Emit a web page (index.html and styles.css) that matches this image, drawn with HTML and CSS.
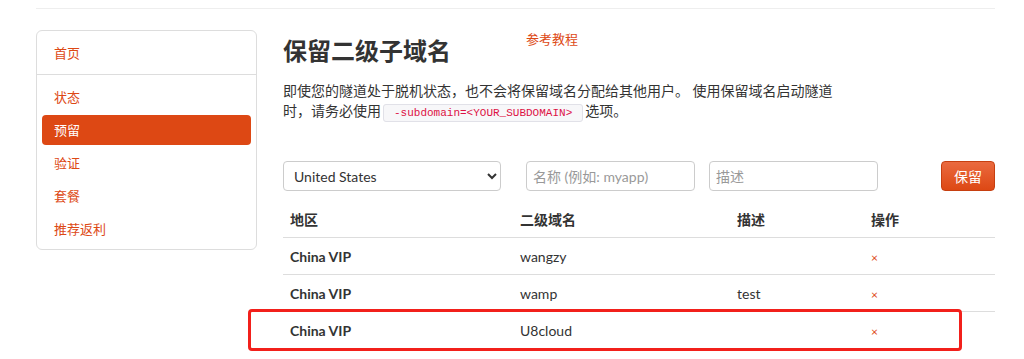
FILE: index.html
```html
<!DOCTYPE html>
<html lang="zh-CN">
<head>
    <meta charset="UTF-8">
    <title>保留二级子域名</title>
    <link rel="stylesheet" href="styles.css">
</head>
<body>

<div class="page">
    <div class="top-rule"></div>

    <div class="layout">
        <!-- 左侧菜单 -->
        <nav class="side-nav">
            <a class="nav-home" href="#">首页</a>
            <ul class="nav-list">
                <li><a href="#">状态</a></li>
                <li class="active"><a href="#">预留</a></li>
                <li><a href="#">验证</a></li>
                <li><a href="#">套餐</a></li>
                <li><a href="#">推荐返利</a></li>
            </ul>
        </nav>

        <!-- 右侧内容 -->
        <section class="content">
            <div class="title-row">
                <h1>保留二级子域名</h1>
                <a class="doc-link" href="#">参考教程</a>
            </div>
            <p class="intro">即使您的隧道处于脱机状态，也不会将保留域名分配给其他用户。 使用保留域名启动隧道时，请务必使用<code>-subdomain=&lt;YOUR_SUBDOMAIN&gt;</code>选项。</p>

            <form class="reserve-form">
                <select class="region-select">
                    <option>United States</option>
                    <option>China VIP</option>
                </select>
                <input class="name-input" type="text" placeholder="名称 (例如: myapp)">
                <input class="desc-input" type="text" placeholder="描述">
                <button class="reserve-btn" type="button">保留</button>
            </form>

            <div class="table-wrap">
                <table class="domain-table">
                    <thead>
                        <tr>
                            <th class="col-region">地区</th>
                            <th class="col-sub">二级域名</th>
                            <th class="col-desc">描述</th>
                            <th>操作</th>
                        </tr>
                    </thead>
                    <tbody>
                        <tr>
                            <td class="region">China VIP</td>
                            <td>wangzy</td>
                            <td></td>
                            <td><a class="del" href="#">×</a></td>
                        </tr>
                        <tr>
                            <td class="region">China VIP</td>
                            <td>wamp</td>
                            <td>test</td>
                            <td><a class="del" href="#">×</a></td>
                        </tr>
                        <tr>
                            <td class="region">China VIP</td>
                            <td>U8cloud</td>
                            <td></td>
                            <td><a class="del" href="#">×</a></td>
                        </tr>
                    </tbody>
                </table>
                <!-- 标注框 -->
                <div class="highlight-box"></div>
            </div>
        </section>
    </div>
</div>

</body>
</html>
```

FILE: styles.css
```css
/* --- 基本设置 --- */
:root {
    --orange: #dd4814;
    --text: #333;
    --muted: #999;
    --border: #ddd;
}

html,
body {
    min-height: 100%;
}

body {
    margin: 0;
    font-family: "Lato", "Noto Sans CJK SC", sans-serif;
    font-size: 14px;
    color: var(--text);
    background: #fff;
}

.page {
    width: 959px;
    margin-left: 36px;
    padding-top: 8px;
    padding-bottom: 12px;
}

.top-rule {
    border-top: 1px solid #eee;
}

.layout {
    display: flex;
    gap: 26px;
    margin-top: 21px;
}

/* --- 左侧菜单 --- */
.side-nav {
    width: 219px;
    height: 218px;
    flex-shrink: 0;
    border: 1px solid var(--border);
    border-radius: 6px;
}

.side-nav a {
    color: var(--orange);
    text-decoration: none;
    font-size: 13px;
}

.nav-home {
    display: block;
    height: 43px;
    line-height: 45px;
    padding: 0 17px;
    border-bottom: 1px solid var(--border);
}

.nav-list {
    list-style: none;
    margin: 0;
    padding: 7px 5px 0;
}

.nav-list li {
    margin-bottom: 3px;
}

.nav-list li a {
    display: block;
    height: 30px;
    line-height: 30px;
    padding: 0 12px;
    border-radius: 4px;
}

.nav-list li.active a {
    background: var(--orange);
    color: #fff;
}

/* --- 右侧内容 --- */
.content {
    flex: 1;
}

.title-row {
    display: flex;
    align-items: flex-start;
}

.title-row h1 {
    margin: 4px 0 0;
    font-size: 24px;
    line-height: 34px;
    font-weight: bold;
    color: #333;
}

.doc-link {
    margin-left: 75px;
    color: var(--orange);
    text-decoration: none;
    font-size: 13px;
    line-height: 18px;
}

.intro {
    max-width: 555px;
    margin: 13px 0 0;
    font-size: 14px;
    line-height: 20px;
    color: #333;
}

.intro code {
    font-family: "Liberation Mono", monospace;
    font-size: 11px;
    color: #dd1144;
    background: #f7f7f9;
    border: 1px solid #e1e1e8;
    border-radius: 3px;
    padding: 2px 10px;
    margin: 0 2px;
}

/* --- 表单 --- */
.reserve-form {
    display: flex;
    align-items: center;
    margin-top: 38px;
    height: 30px;
}

.reserve-form select,
.reserve-form input {
    height: 30px;
    box-sizing: border-box;
    border: 1px solid #ccc;
    border-radius: 4px;
    font-family: "Lato", "Noto Sans CJK SC", sans-serif;
    font-size: 14px;
    color: #333;
    background: #fff;
}

.region-select {
    width: 218px;
    padding: 0 6px;
}

.name-input {
    width: 169px;
    margin-left: 25px;
    padding: 0 6px;
}

.desc-input {
    width: 169px;
    margin-left: 14px;
    padding: 0 6px;
}

.reserve-form input::placeholder {
    color: var(--muted);
}

.reserve-btn {
    margin-left: auto;
    width: 54px;
    height: 30px;
    border: 1px solid #c63f10;
    border-radius: 4px;
    background: linear-gradient(#ea6a3f, #dd4814);
    color: #fff;
    font-family: "Lato", "Noto Sans CJK SC", sans-serif;
    font-size: 14px;
    cursor: pointer;
}

/* --- 表格 --- */
.table-wrap {
    position: relative;
    margin-top: 10px;
}

.domain-table {
    width: 100%;
    border-collapse: collapse;
}

.domain-table th,
.domain-table td {
    text-align: left;
    padding: 0 7px;
    height: 36px;
    border-bottom: 1px solid var(--border);
    font-size: 14px;
}

.domain-table th {
    font-weight: bold;
}

.domain-table tbody tr:last-child td {
    border-bottom: none;
}

.col-region { width: 216px; }
.col-sub { width: 203px; }
.col-desc { width: 120px; }

.domain-table td.region {
    font-weight: bold;
}

.del {
    color: var(--orange);
    text-decoration: none;
    font-size: 12px;
}

/* 红色标注框 */
.highlight-box {
    position: absolute;
    left: -35px;
    top: 108px;
    width: 708px;
    height: 36px;
    border: 3px solid #f2201b;
    border-radius: 4px;
}
```
